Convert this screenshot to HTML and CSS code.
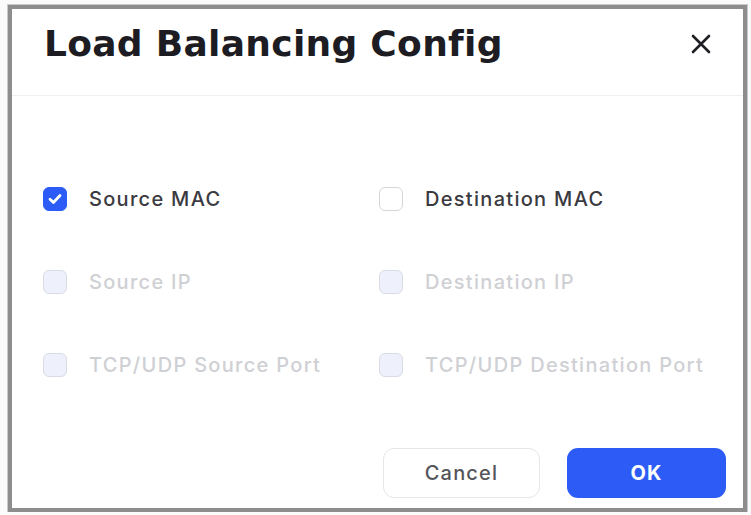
FILE: index.html
```html
<!DOCTYPE html>
<html lang="en">
<head>
  <meta charset="UTF-8" />
  <title>Load Balancing Config</title>
  <link rel="stylesheet" href="styles.css">
</head>
<body>

<div class="dialog">
  <div class="dialog-header">
    <h2>Load Balancing Config</h2>
    <button class="close-btn" aria-label="Close">
      <svg width="20" height="20" viewBox="0 0 20 20">
        <path d="M2 2 L18 18 M18 2 L2 18" stroke="#1f1f24" stroke-width="2.6" stroke-linecap="round"/>
      </svg>
    </button>
  </div>

  <div class="dialog-body">
    <div class="option-grid">
      <label class="option">
        <span class="box checked">
          <svg width="16" height="16" viewBox="0 0 16 16">
            <path d="M3 8.3 L6.4 11.4 L13 4.6" fill="none" stroke="#fff" stroke-width="2.8" stroke-linecap="round" stroke-linejoin="round"/>
          </svg>
        </span>
        Source MAC
      </label>
      <label class="option">
        <span class="box"></span>
        Destination MAC
      </label>
      <label class="option disabled">
        <span class="box"></span>
        Source IP
      </label>
      <label class="option disabled">
        <span class="box"></span>
        Destination IP
      </label>
      <label class="option disabled">
        <span class="box"></span>
        TCP/UDP Source Port
      </label>
      <label class="option disabled">
        <span class="box"></span>
        TCP/UDP Destination Port
      </label>
    </div>
  </div>

  <div class="dialog-footer">
    <button class="btn btn-cancel">Cancel</button>
    <button class="btn btn-ok">OK</button>
  </div>
</div>

</body>
</html>
```

FILE: styles.css
```css
* {
  margin: 0;
  padding: 0;
  box-sizing: border-box;
  font-family: Inter, 'Noto Sans', sans-serif;
}

body {
  background: #fbfbfb;
  padding: 5px 0 0 8px;
}

.dialog {
  width: 739px;
  height: 507px;
  background: #fff;
  border: 4px solid #8d8d8d;
  box-shadow: 0 0 0 1px #c9c9c9;
  display: flex;
  flex-direction: column;
}

.dialog-header {
  height: 87px;
  padding: 13px 31px 0 32px;
  border-bottom: 1px solid #efefef;
  display: flex;
  justify-content: space-between;
  align-items: flex-start;
}

.dialog-header h2 {
  font-family: 'DejaVu Sans', Inter, sans-serif;
  font-size: 36px;
  line-height: 44px;
  font-weight: 700;
  color: #1c1c22;
  letter-spacing: 0.3px;
}

.close-btn {
  background: none;
  border: none;
  height: 44px;
  width: 22px;
  display: flex;
  align-items: center;
  justify-content: center;
  cursor: pointer;
}

.dialog-body {
  padding: 91px 31px 0 31px;
}

.option-grid {
  display: grid;
  grid-template-columns: 336px 1fr;
  row-gap: 59px;
}

.option {
  display: flex;
  align-items: center;
  gap: 22px;
  height: 24px;
  font-size: 20px;
  font-weight: 500;
  letter-spacing: 1.3px;
  color: #3a3a40;
}

.box {
  width: 24px;
  height: 24px;
  border-radius: 6px;
  border: 1.5px solid #d6d6da;
  background: #fff;
  display: flex;
  align-items: center;
  justify-content: center;
  flex-shrink: 0;
}

.box.checked {
  background: #2c5cf5;
  border-color: #2c5cf5;
}

.option.disabled {
  color: #cfd0d4;
}

.option.disabled .box {
  background: #eef1fb;
  border-color: #d9dce4;
}

.dialog-footer {
  margin-top: auto;
  padding: 0 17px 10px 0;
  display: flex;
  justify-content: flex-end;
  gap: 27px;
}

.btn {
  height: 50px;
  border-radius: 11px;
  font-size: 20px;
  font-weight: 500;
  letter-spacing: 1.2px;
  cursor: pointer;
}

.btn-cancel {
  width: 157px;
  background: #fff;
  border: 1.5px solid #e6e6e8;
  color: #55565c;
}

.btn-ok {
  width: 159px;
  background: #2c5cf5;
  border: none;
  color: #fff;
  font-weight: 700;
}
```
